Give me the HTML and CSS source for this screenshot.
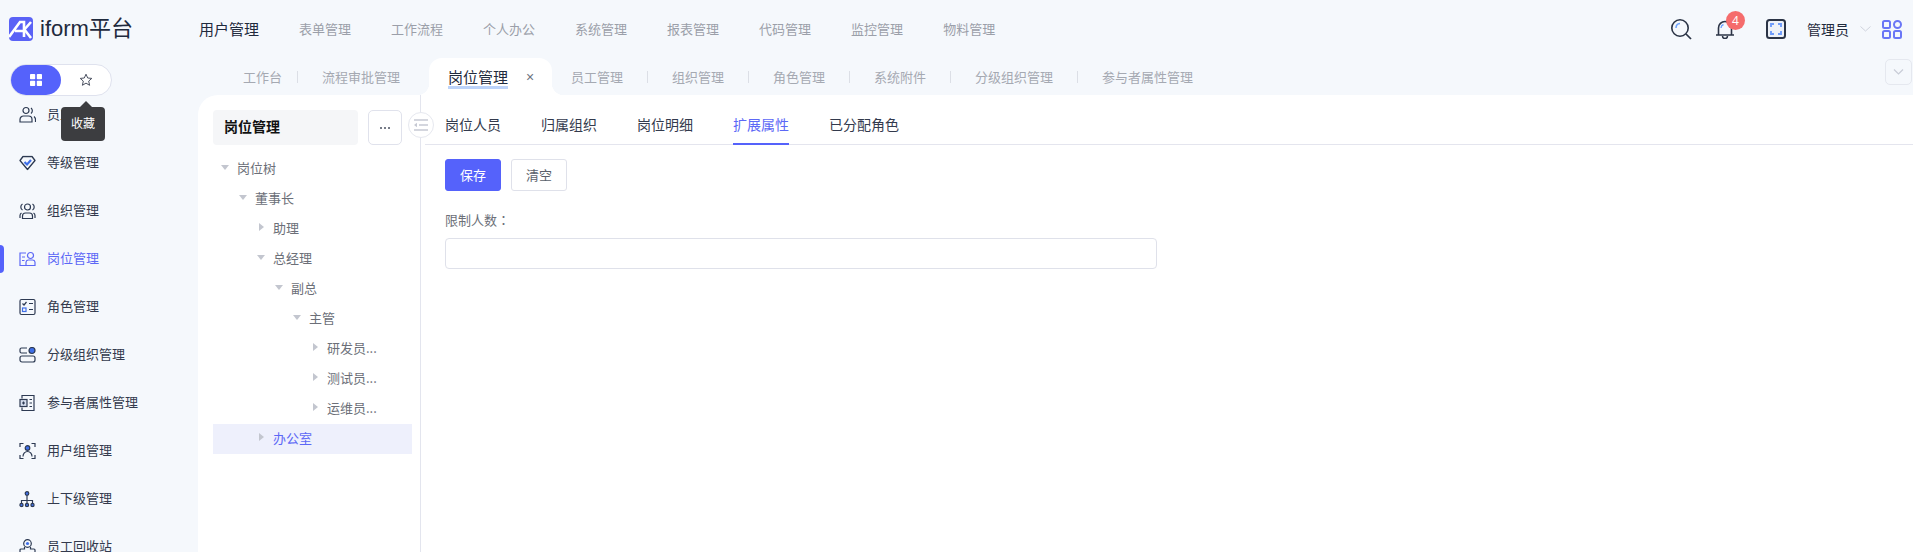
FILE: index.html
```html
<!DOCTYPE html>
<html lang="zh-CN">
<head>
<meta charset="utf-8">
<title>iform平台</title>
<link rel="stylesheet" href="styles.css">
</head>
<body>
<div class="app">
  <header class="topbar">
    <div class="brand">
      <svg class="logo" width="24" height="24" viewBox="0 0 24 24"><rect width="24" height="24" rx="4" fill="#5a62f6"/><path d="M0 20 L11 5 H15 V20 M6 14 H14" fill="none" stroke="#fff" stroke-width="2.6"/><path d="M15 13 L22 5 M15 12 L22 21" fill="none" stroke="#fff" stroke-width="2.6"/></svg>
      <span class="brand-name">iform平台</span>
    </div>
    <nav class="topnav">
      <a class="topnav-item active">用户管理</a>
      <a class="topnav-item">表单管理</a>
      <a class="topnav-item">工作流程</a>
      <a class="topnav-item">个人办公</a>
      <a class="topnav-item">系统管理</a>
      <a class="topnav-item">报表管理</a>
      <a class="topnav-item">代码管理</a>
      <a class="topnav-item">监控管理</a>
      <a class="topnav-item">物料管理</a>
    </nav>
    <div class="tools">
      <svg class="tool-search" width="22" height="22" viewBox="0 0 22 22" fill="none"><circle cx="10" cy="10" r="8.2" stroke="#2b3446" stroke-width="1.6"/><path d="M16 16 L21 21" stroke="#2b3446" stroke-width="1.7"/><path d="M6 10 A4.5 4.5 0 0 1 10 5.6" stroke="#6ea4ff" stroke-width="1.5"/></svg>
      <div class="bell">
        <svg width="20" height="20" viewBox="0 0 20 20" fill="none"><path d="M1 16 H19 M3.5 16 V9 A6.5 6.5 0 0 1 16.500 9 V16" stroke="#2b3446" stroke-width="1.6"/><path d="M7.500 17 A2.500 2.500 0 0 0 12.500 17" stroke="#2b3446" stroke-width="1.5"/><path d="M6 9 A4 4 0 0 1 8.500 5.500" stroke="#6ea4ff" stroke-width="1.4"/></svg>
        <span class="badge">4</span>
      </div>
      <svg class="tool-full" width="20" height="20" viewBox="0 0 20 20" fill="none"><rect x="1" y="1" width="18" height="18" rx="2.500" fill="#edf1f8" stroke="#2b3446" stroke-width="2"/><path d="M8 5 H5 V8 M12 5 H15 V8 M5 12 V15 H8 M15 12 V15 H12" stroke="#6f9cfb" stroke-width="1.900"/></svg>
      <span class="user">管理员</span>
      <svg class="user-caret" width="11" height="6" viewBox="0 0 11 6" fill="none"><path d="M.5 .5 L5.500 5 L10.500 .5" stroke="#cfd3dd"/></svg>
      <svg class="tool-grid" width="20" height="19" viewBox="0 0 20 19" fill="none" stroke="#6a76f6" stroke-width="2"><rect x="1" y="1" width="7" height="7" rx="1.500"/><circle cx="15.500" cy="4.500" r="3.500"/><rect x="1" y="11" width="7" height="7" rx="1.500"/><rect x="12" y="11" width="7" height="7" rx="1.500"/></svg>
    </div>
  </header>
  <div class="body">
    <aside class="sidebar">
      <div class="switch-wrap">
        <div class="switch">
          <span class="switch-on">
            <svg width="12" height="12" viewBox="0 0 12 12" fill="#fff"><rect width="5.200" height="5.200" rx=".8"/><rect x="6.800" width="5.200" height="5.200" rx=".8"/><rect y="6.800" width="5.200" height="5.200" rx=".8"/><rect x="6.800" y="6.800" width="5.200" height="5.200" rx=".8"/></svg>
          </span>
          <span class="switch-off">
            <svg width="14" height="14" viewBox="0 0 14 14" fill="none"><path d="M7 1.200 L8.700 5 L12.800 5.400 L9.700 8.100 L10.600 12.300 L7 10.100 L3.400 12.300 L4.300 8.100 L1.200 5.400 L5.300 5 Z" stroke="#4a5060" stroke-linejoin="round"/></svg>
          </span>
        </div>
        <div class="tooltip">收藏</div>
      </div>
      <ul class="menu">
        <li class="menu-item">
          <svg class="mi" width="17" height="17" viewBox="0 0 17 17" fill="none" stroke="#2d3a52" stroke-width="1.200"><circle cx="7" cy="4" r="3"/><path d="M1 15.500 V13 A3.500 3.500 0 0 1 4.500 9.500 H9.500 A3.500 3.500 0 0 1 13 13 V15.500 Z"/><path d="M12 1.500 A3.500 3.500 0 0 1 12 7 M15 10 A4 4 0 0 1 16.500 13 V15.500"/></svg>
          员工管理
        </li>
        <li class="menu-item">
          <svg class="mi" width="17" height="15" viewBox="0 0 17 15" fill="none"><path d="M4 1 H13 L16 5 L8.500 14 L1 5 Z" stroke="#2d3a52" stroke-width="1.300" stroke-linejoin="round"/><path d="M5.500 6.500 L8 9 L12 4.500" stroke="#3f6fe8" stroke-width="2.200"/></svg>
          等级管理
        </li>
        <li class="menu-item">
          <svg class="mi" width="17" height="17" viewBox="0 0 17 17" fill="none" stroke="#2d3a52" stroke-width="1.200"><circle cx="8.500" cy="4.500" r="3"/><path d="M3.500 16 V13.500 A3 3 0 0 1 6.500 10.500 H10.500 A3 3 0 0 1 13.500 13.500 V16 Z"/><path d="M3.500 1.500 A3.500 3.500 0 0 0 3.500 7.500 M13.500 1.500 A3.500 3.500 0 0 1 13.500 7.500 M1 15.500 V13 A3 3 0 0 1 2.500 10.500 M16 15.500 V13 A3 3 0 0 0 14.500 10.500"/></svg>
          组织管理
        </li>
        <li class="menu-item active">
          <svg class="mi" width="17" height="15" viewBox="0 0 17 15" fill="none" stroke="#5d68f6" stroke-width="1.200"><path d="M7 1.500 H1 V14 H16 V10.500 A2.500 2.500 0 0 0 13.500 8.500 H9.500 A2.500 2.500 0 0 0 7 10.500 V14"/><circle cx="11.500" cy="4" r="3"/><path d="M3 5.500 H6 M3 9 H5.500"/></svg>
          岗位管理
        </li>
        <li class="menu-item">
          <svg class="mi" width="17" height="17" viewBox="0 0 17 17" fill="none" stroke="#2d3a52" stroke-width="1.200"><rect x="1" y="1" width="15" height="15" rx="1.500"/><path d="M3.500 5 L5 6.500 L7.500 3.500 M10 5 H14 M10 11 H14"/><rect x="3.500" y="9.500" width="3.500" height="3.500" stroke="#3f6fe8"/></svg>
          角色管理
        </li>
        <li class="menu-item">
          <svg class="mi" width="17" height="16" viewBox="0 0 17 16" fill="none" stroke="#2d3a52" stroke-width="1.200"><path d="M8 1 H2.500 A1.500 1.500 0 0 0 1 2.500 V4.500 A1.500 1.500 0 0 0 2.500 6 H8"/><circle cx="13" cy="3.500" r="3" fill="#3f6fe8" stroke="#2d3a52"/><rect x="1" y="9" width="15" height="6" rx="2"/></svg>
          分级组织管理
        </li>
        <li class="menu-item">
          <svg class="mi" width="16" height="17" viewBox="0 0 16 17" fill="none" stroke="#2d3a52" stroke-width="1.200"><path d="M3 4 V1 H15 V16 H3 V13"/><rect x="1" y="5" width="7" height="7" fill="#d5deef"/><path d="M4.500 7 V10 M3 8.500 H6 M10.500 5 H13 M10.500 8.500 H13 M10.500 12 H13"/></svg>
          参与者属性管理
        </li>
        <li class="menu-item">
          <svg class="mi" width="17" height="17" viewBox="0 0 17 17" fill="none" stroke="#2d3a52" stroke-width="1.200"><path d="M1 4.500 V1 H4.500 M12.500 1 H16 V4.500 M1 12.500 V16 H4.500 M16 12.500 V16 H12.500"/><circle cx="8.500" cy="5.500" r="2.300" fill="#3f6fe8"/><path d="M4 14 A4.500 5 0 0 1 13 14"/></svg>
          用户组管理
        </li>
        <li class="menu-item">
          <svg class="mi" width="16" height="17" viewBox="0 0 16 17" fill="none" stroke="#2d3a52" stroke-width="1.200"><circle cx="8" cy="3" r="1.800" fill="#3f6fe8"/><path d="M8 5 V10 M2.500 13 V10 H13.500 V13 M8 10 V13"/><circle cx="2.500" cy="14.500" r="1.600" fill="#3f6fe8"/><circle cx="8" cy="14.500" r="1.600" fill="#3f6fe8"/><circle cx="13.500" cy="14.500" r="1.600" fill="#3f6fe8"/></svg>
          上下级管理
        </li>
        <li class="menu-item">
          <svg class="mi" width="17" height="17" viewBox="0 0 17 17" fill="none" stroke="#2d3a52" stroke-width="1.200"><circle cx="8.500" cy="5" r="3.800"/><circle cx="8.500" cy="5" r="1.600" fill="#3f6fe8" stroke="none"/><path d="M5.500 8.500 V10.500 H2 A1 1 0 0 0 1 11.500 V15 H16 V11.500 A1 1 0 0 0 15 10.500 H11.500 V8.500"/></svg>
          员工回收站
        </li>
      </ul>
    </aside>
    <main class="main">
      <div class="tabbar">
        <a class="page-tab">工作台</a><i class="sep first"></i>
        <a class="page-tab">流程审批管理</a>
        <a class="page-tab current"><span class="current-name">岗位管理</span><span class="close">×</span></a>
        <a class="page-tab">员工管理</a><i class="sep"></i>
        <a class="page-tab">组织管理</a><i class="sep"></i>
        <a class="page-tab">角色管理</a><i class="sep"></i>
        <a class="page-tab">系统附件</a><i class="sep"></i>
        <a class="page-tab">分级组织管理</a><i class="sep"></i>
        <a class="page-tab">参与者属性管理</a>
        <button class="tab-more" aria-label="more"><svg width="11" height="6" viewBox="0 0 11 6" fill="none"><path d="M1 .5 L5.500 5 L10 .5" stroke="#c8ccd6" stroke-width="1.200"/></svg></button>
      </div>
      <div class="panel">
        <section class="tree-pane">
          <div class="tree-head">
            <div class="tree-title">岗位管理</div>
            <button class="tree-more" aria-label="more"><svg width="10" height="2" viewBox="0 0 10 2" fill="#4a5060"><circle cx="1" cy="1" r="1"/><circle cx="5" cy="1" r="1"/><circle cx="9" cy="1" r="1"/></svg></button>
          </div>
          <ul class="tree">
            <li class="node lv0"><i class="arrow down"></i>岗位树</li>
            <li class="node lv1"><i class="arrow down"></i>董事长</li>
            <li class="node lv2"><i class="arrow right"></i>助理</li>
            <li class="node lv2"><i class="arrow down"></i>总经理</li>
            <li class="node lv3"><i class="arrow down"></i>副总</li>
            <li class="node lv4"><i class="arrow down"></i>主管</li>
            <li class="node lv5"><i class="arrow right"></i>研发员...</li>
            <li class="node lv5"><i class="arrow right"></i>测试员...</li>
            <li class="node lv5"><i class="arrow right"></i>运维员...</li>
            <li class="node lv2 selected"><i class="arrow right"></i>办公室</li>
          </ul>
          <button class="collapse" aria-label="collapse"><svg width="16" height="12" viewBox="0 0 16 12" fill="none" stroke="#c6c9d3" stroke-width="1.500"><path d="M1 1 H15 M6 6 H15 M1 11 H15"/><path d="M1 6 L4 3.800 V8.200 Z" fill="#c6c9d3" stroke="none"/></svg></button>
        </section>
        <section class="detail">
          <div class="detail-tabs">
            <a class="detail-tab">岗位人员</a>
            <a class="detail-tab">归属组织</a>
            <a class="detail-tab">岗位明细</a>
            <a class="detail-tab active">扩展属性</a>
            <a class="detail-tab">已分配角色</a>
          </div>
          <div class="detail-body">
            <div class="actions">
              <button class="btn primary">保存</button>
              <button class="btn">清空</button>
            </div>
            <label class="field-label">限制人数<span class="colon" lang="zh-Hant">：</span></label>
            <input class="field-input" type="text">
          </div>
        </section>
      </div>
    </main>
  </div>
</div>
</body>
</html>
```
FILE: styles.css
```css
* { box-sizing: border-box; }
html, body { margin: 0; height: 100%; }
body {
  font-family: "Noto Sans CJK SC", "Noto Sans", sans-serif;
  background: #f5f8fc;
  color: #333a4d;
  overflow: hidden;
}
ul { list-style: none; margin: 0; padding: 0; }
button { font-family: inherit; cursor: pointer; }

.app { display: flex; flex-direction: column; height: 552px; width: 1913px; overflow: hidden; }

/* top bar */
.topbar { display: flex; align-items: center; height: 58px; flex: none; }
.brand { display: flex; align-items: center; width: 199px; padding-left: 9px; flex: none; }
.logo { flex: none; margin-right: 7px; }
.brand-name { font-family: "Liberation Sans", "Noto Sans CJK SC", sans-serif; font-size: 22px; line-height: 30px; color: #1f2a3d; }
.topnav { display: flex; align-items: center; gap: 40px; }
.topnav-item { font-size: 13px; color: #9b9fa9; line-height: 20px; }
.topnav-item.active { font-size: 15px; color: #1f2a3d; }
.tools { display: flex; align-items: center; margin-left: auto; padding-right: 11px; }
.tool-search { margin-right: 23px; }
.bell { position: relative; width: 20px; height: 20px; margin-right: 31px; }
.bell svg { display: block; }
.badge {
  position: absolute; left: 11px; top: -8px;
  width: 19px; height: 19px; border-radius: 50%;
  background: #f56c6c; color: #fff;
  font: 12px/19px "Open Sans", sans-serif; text-align: center;
}
.tool-full { margin-right: 21px; }
.user { font-size: 14px; color: #1f2a3d; line-height: 20px; margin-right: 11px; }
.user-caret { margin-right: 11px; }

/* layout */
.body { display: flex; flex: 1; min-height: 0; }
.sidebar { width: 198px; flex: none; }
.main { flex: 1; display: flex; flex-direction: column; min-width: 0; }

/* sidebar */
.switch-wrap { position: relative; height: 33px; padding: 6px 0 0 10px; }
.switch {
  position: relative; z-index: 1;
  display: flex; width: 102px; height: 32px;
  background: #fff; border: 1px solid #dfe2ee; border-radius: 16px;
}
.switch-on {
  display: flex; align-items: center; justify-content: center;
  width: 50px; height: 30px; background: #5562fb; border-radius: 15px;
}
.switch-off { display: flex; align-items: center; justify-content: center; flex: 1; }
.tooltip {
  position: absolute; left: 61px; top: 49px; z-index: 3;
  width: 44px; height: 34px; border-radius: 4px;
  background: #3c3d40; color: #fff;
  font-size: 12px; line-height: 32px; text-align: center;
}
.tooltip::before {
  content: ""; position: absolute; left: 19px; top: -6px;
  border: 6px solid transparent; border-top: 0; border-bottom-color: #3c3d40;
}
.menu-item {
  position: relative;
  display: flex; align-items: center;
  height: 48px; padding: 0 0 3px 47px;
  font-size: 13px; color: #333a4d;
}
.mi { position: absolute; left: 19px; top: 50%; transform: translateY(-50%); }
.menu-item.active { color: #5d68f6; }
.menu-item.active::before {
  content: ""; position: absolute; left: 0; top: 10px;
  width: 4px; height: 28px; background: #5562fb; border-radius: 0 4px 4px 0;
}

/* page tabs */
.tabbar { display: flex; align-items: center; height: 37px; flex: none; padding-left: 45px; position: relative; }
.page-tab { font-size: 13px; color: #a5a9b2; line-height: 20px; }
.sep { width: 1px; height: 12px; background: #dcdfe6; margin: 0 24px; }
.sep.first { margin: 0 24px 0 15px; }
.page-tab.current {
  position: relative;
  display: flex; align-items: center;
  width: 123px; height: 37px; padding-left: 19px; margin: 0 19px 0 29px;
  background: #fff; border-radius: 13px 13px 0 0;
  font-size: 15px; color: #1f2a3d;
}
.page-tab.current::before, .page-tab.current::after {
  content: ""; position: absolute; bottom: 0; width: 12px; height: 12px;
}
.page-tab.current::before { left: -12px; background: radial-gradient(circle at 0 0, transparent 12px, #fff 12.5px); }
.page-tab.current::after { right: -12px; background: radial-gradient(circle at 100% 0, transparent 12px, #fff 12.5px); }
.current-name { background: linear-gradient(transparent 22px, #bcd3fa 22px, #bcd3fa 25px, transparent 25px); line-height: 26px; }
.close { margin-left: 18px; font-family: "Liberation Sans", sans-serif; font-size: 14px; color: #6d7280; line-height: 20px; }
.tab-more {
  margin-left: auto; margin-right: 1px; margin-top: -9px;
  display: flex; align-items: center; justify-content: center;
  width: 27px; height: 26px; padding: 0;
  background: #f5f8fc; border: 1px solid #e5e8ef; border-radius: 5px;
}

/* panel */
.panel { flex: 1; display: flex; background: #fff; border-top-left-radius: 20px; min-height: 0; }
.tree-pane { position: relative; width: 223px; flex: none; padding: 15px 8px 0 15px; border-right: 1px solid #e3e5ee; }
.tree-head { display: flex; gap: 10px; margin-bottom: 9px; }
.tree-title {
  width: 145px; height: 35px; padding-left: 11px;
  background: #f5f6f8; border-radius: 4px;
  font-size: 14px; font-weight: 700; line-height: 33px; color: #111;
}
.tree-more {
  display: flex; align-items: center; justify-content: center;
  width: 34px; height: 35px; padding: 0;
  background: #fff; border: 1px solid #e0e2ec; border-radius: 5px;
}
.collapse {
  position: absolute; right: -14px; top: 17px; z-index: 2;
  display: flex; align-items: center; justify-content: center;
  width: 26px; height: 26px; padding: 0;
  background: #fff; border: 1px solid #e6e8ef; border-radius: 50%;
}
.node { display: flex; align-items: center; height: 30px; padding-bottom: 4px; font-size: 13px; color: #6c6f78; }
.arrow { flex: none; width: 24px; height: 10px; display: flex; align-items: center; justify-content: center; }
.arrow::before { content: ""; display: block; border-style: solid; border-color: transparent; }
.arrow.down::before { border-width: 5px 4px 0; border-top-color: #c3c6cf; margin-top: 1px; }
.arrow.right::before { border-width: 4px 0 4px 5px; border-left-color: #c3c6cf; }
.lv1 { padding-left: 18px; }
.lv2 { padding-left: 36px; }
.lv3 { padding-left: 54px; }
.lv4 { padding-left: 72px; }
.lv5 { padding-left: 90px; }
.node.selected { background: #eef0fc; color: #5d68f6; }

/* detail */
.detail { flex: 1; min-width: 0; padding-left: 4px; }
.detail-tabs { display: flex; gap: 40px; height: 50px; padding-left: 20px; border-bottom: 1px solid #e4e5ee; }
.detail-tab { position: relative; height: 50px; font-size: 14px; line-height: 58px; color: #333a4d; }
.detail-tab.active { color: #5d68f6; }
.detail-tab.active::after {
  content: ""; position: absolute; left: 0; right: 0; bottom: 0; height: 2px; background: #5562fb;
}
.detail-body { padding: 14px 0 0 20px; }
.actions { display: flex; gap: 10px; }
.btn {
  width: 56px; height: 32px; padding: 0 0 2px;
  background: #fff; border: 1px solid #dfe1ea; border-radius: 3px;
  font-size: 13px; color: #5a5f6b;
}
.btn.primary { background: #5562fb; border-color: #5562fb; color: #fff; }
.field-label { display: block; margin-top: 19px; font-size: 13px; line-height: 20px; color: #6c6f78; }
.colon { font-family: "Noto Sans CJK TC", sans-serif; }
.field-input {
  display: block; width: 712px; height: 31px; margin-top: 8px;
  border: 1px solid #dfe1ea; border-radius: 4px; background: #fff; outline: none;
}
```
